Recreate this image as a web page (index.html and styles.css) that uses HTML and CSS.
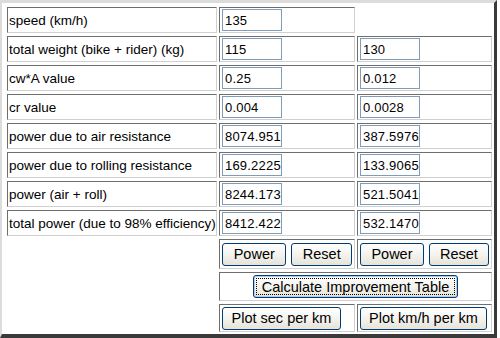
FILE: index.html
```html
<!DOCTYPE html>
<html>
<head>
<meta charset="utf-8">
<link rel="stylesheet" href="styles.css">
</head>
<body>
<div class="frame">
<table class="calc">
<colgroup><col class="c1"><col class="c2"><col class="c3"></colgroup>
<tr><td class="lbl">speed (km/h)</td><td><input class="num" value="135"></td><td></td></tr>
<tr><td class="lbl">total weight (bike + rider) (kg)</td><td><input class="num" value="115"></td><td><input class="num" value="130"></td></tr>
<tr><td class="lbl">cw*A value</td><td><input class="num" value="0.25"></td><td><input class="num" value="0.012"></td></tr>
<tr><td class="lbl">cr value</td><td><input class="num" value="0.004"></td><td><input class="num" value="0.0028"></td></tr>
<tr><td class="lbl">power due to air resistance</td><td><input class="num" value="8074.951"></td><td><input class="num" value="387.5976"></td></tr>
<tr><td class="lbl">power due to rolling resistance</td><td><input class="num" value="169.2225"></td><td><input class="num" value="133.9065"></td></tr>
<tr><td class="lbl">power (air + roll)</td><td><input class="num" value="8244.173"></td><td><input class="num" value="521.5041"></td></tr>
<tr><td class="lbl">total power (due to 98% efficiency)</td><td><input class="num" value="8412.422"></td><td><input class="num" value="532.1470"></td></tr>
<tr class="btnrow"><td rowspan="3"></td><td><div class="pair"><button class="btn b-power">Power</button><button class="btn b-reset">Reset</button></div></td><td><div class="pair"><button class="btn b-power">Power</button><button class="btn b-reset">Reset</button></div></td></tr>
<tr class="calcrow"><td colspan="2" class="center"><button class="btn b-calc">Calculate Improvement Table</button></td></tr>
<tr class="plotrow"><td><button class="btn b-plot1">Plot sec per km</button></td><td><button class="btn b-plot2">Plot km/h per km</button></td></tr>
</table>
</div>
</body>
</html>
```
FILE: styles.css
```css
html, body {
  margin: 0;
  padding: 0;
  background: #ffffff;
}
body {
  font-family: "Liberation Sans", Arial, sans-serif;
  font-size: 13.5px;
  color: #000;
}
.frame {
  width: 492px;
  height: 331px;
  border-style: solid;
  border-width: 3px 3px 4px 2px;
  border-color: #dcdcdc #3a3a3a #3a3a3a #dcdcdc;
  padding: 0;
}
.calc {
  border-collapse: separate;
  border-spacing: 2px 3px;
  empty-cells: hide;
  table-layout: fixed;
  width: 489px;
  margin: 1px 0 0 3px;
}
.c1 { width: 210px; }
.c2 { width: 136px; }
.c3 { width: 135px; }
.calc td {
  box-sizing: border-box;
  height: 26px;
  padding: 0 2px;
  border-style: solid;
  border-width: 1px;
  border-color: #6e6e6e #d0d0d0 #d0d0d0 #6e6e6e;
  white-space: nowrap;
  overflow: hidden;
  vertical-align: middle;
}
.calc td.lbl {
  padding-left: 1px;
}
.num {
  box-sizing: border-box;
  width: 60px;
  height: 22px;
  border: 1px solid #7f9db9;
  padding: 1px 0 1px 2px;
  font-family: "Liberation Sans", Arial, sans-serif;
  font-size: 13px;
  letter-spacing: 0.2px;
  color: #000;
  background: #fff;
  display: block;
}
.btnrow td { height: 30px; }
.calcrow td { height: 29px; }
.plotrow td { height: 28px; }
.center { text-align: center; }
.pair {
  display: flex;
  gap: 5px;
}
.btn {
  box-sizing: border-box;
  height: 23px;
  border: 1px solid #003c74;
  border-radius: 3px;
  background: linear-gradient(#ffffff 0%, #f4f3ee 50%, #e6e3d6 100%);
  font-family: "Liberation Sans", Arial, sans-serif;
  font-size: 14.5px;
  color: #000;
  padding: 0;
  display: inline-block;
  vertical-align: middle;
}
.b-power { width: 66px; }
.b-reset { width: 62px; }
.b-calc {
  width: 205px;
  box-shadow: inset 0 0 0 1px #b8c8f0;
  outline: 1px dotted #000;
  outline-offset: -4px;
}
.b-plot1 { width: 119px; }
.b-plot2 { width: 127px; }
```
